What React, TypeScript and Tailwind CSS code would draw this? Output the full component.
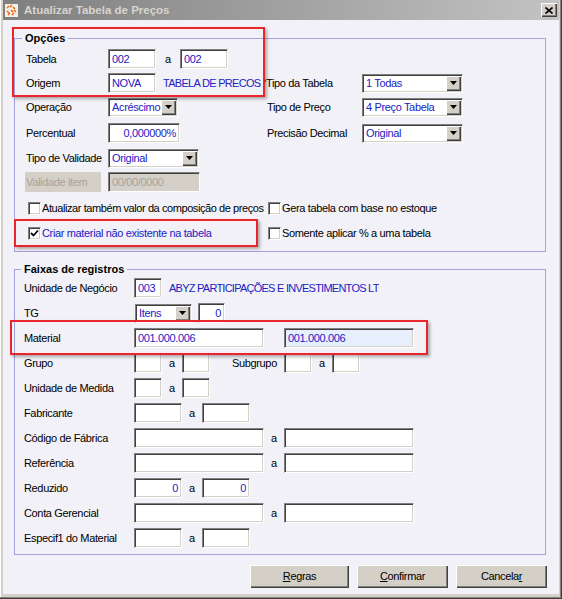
import React from "react";

const sunken =
  "border border-t-[#808080] border-l-[#808080] border-b-[#ffffff] border-r-[#ffffff] shadow-[inset_1px_1px_0_#404040,inset_-1px_-1px_0_#d4d0c8]";
const raised =
  "bg-[#d4d0c8] shadow-[inset_1px_1px_0_#ffffff,inset_-1px_-1px_0_#404040,inset_-2px_-2px_0_#808080]";

const Label = ({ w, children }: { w: string; children: React.ReactNode }) => (
  <span className={`${w} shrink-0 whitespace-nowrap text-black`}>{children}</span>
);

const Input = ({
  w,
  value = "",
  right = false,
  bg = "bg-white",
}: {
  w: string;
  value?: string;
  right?: boolean;
  bg?: string;
}) => (
  <div
    className={`${w} ${bg} ${sunken} h-[20px] shrink-0 flex items-center px-[3px] text-[#2121c4] whitespace-nowrap overflow-hidden ${
      right ? "justify-end" : ""
    }`}
  >
    {value}
  </div>
);

const Select = ({ w, value }: { w: string; value: string }) => (
  <div className={`${w} ${sunken} h-[19px] shrink-0 bg-white flex items-stretch p-[1px]`}>
    <span className="flex-1 pl-[2px] flex items-center text-[#2121c4] whitespace-nowrap overflow-hidden">
      {value}
    </span>
    <span className={`${raised} w-[15px] shrink-0 flex items-center justify-center`}>
      <svg width="7" height="4" viewBox="0 0 7 4">
        <path d="M0 0h7L3.5 4z" fill="#000" />
      </svg>
    </span>
  </div>
);

const Check = ({
  checked = false,
  label,
  blue = false,
  tight = false,
}: {
  checked?: boolean;
  label: string;
  blue?: boolean;
  tight?: boolean;
}) => (
  <div className="flex items-center">
    <span className={`${sunken} w-[13px] h-[13px] bg-white flex items-center justify-center shrink-0`}>
      {checked && (
        <svg width="9" height="9" viewBox="0 0 9 9">
          <path d="M1 4l2.5 2.5L8 1.5" stroke="#000" strokeWidth="1.8" fill="none" />
        </svg>
      )}
    </span>
    <span
      className={`ml-[1px] whitespace-nowrap ${blue ? "text-[#2121c4]" : "text-black"} ${
        tight ? "tracking-[-0.42px]" : ""
      }`}
    >
      {label}
    </span>
  </div>
);

const A = ({ w = "w-[20px]" }: { w?: string }) => <span className={`${w} shrink-0 text-center`}>a</span>;

const Row = ({ children, cls = "" }: { children: React.ReactNode; cls?: string }) => (
  <div className={`h-[20px] flex items-center ${cls}`}>{children}</div>
);

const Button = ({ w, children }: { w: string; children: React.ReactNode }) => (
  <div className={`${w} ${raised} h-[23px] flex items-center justify-center text-black`}>{children}</div>
);

export default function App() {
  return (
    <div className="relative w-[562px] h-[599px] bg-[#d4d0c8] px-[3px] pb-[5px] flex flex-col font-['Liberation_Sans',Arial,sans-serif] text-[11px] leading-[13px] tracking-[-0.35px] shadow-[inset_-1px_-1px_0_#404040,inset_-2px_-2px_0_#808080,inset_1px_0_0_#ffffff]">
      {/* barra de titulo */}
      <div className="h-[20px] shrink-0 flex items-center bg-linear-to-r from-[#7f7f7f] to-[#c3c3c3] pl-[2px] pr-[2px]">
        <svg width="13" height="13" viewBox="0 0 13 13" className="shrink-0">
          <rect width="13" height="13" fill="#f4efe8" />
          <path d="M2 4l2-2M5 3l2-2M8 3l2 2M9 6l2 2M2 7l2 2M3 11l2-2M6 6l2 2M7 11l2-2" stroke="#f06a20" strokeWidth="1.6" />
        </svg>
        <span className="ml-[6px] font-bold text-[11.5px] tracking-normal text-[#d8d4ce]">Atualizar Tabela de Preços</span>
        <div className={`${raised} ml-auto w-[16px] h-[14px] flex items-center justify-center`}>
          <svg width="8" height="7" viewBox="0 0 8 7">
            <path d="M0.5 0.5l7 6M7.5 0.5l-7 6" stroke="#000" strokeWidth="1.6" />
          </svg>
        </div>
      </div>

      {/* corpo */}
      <div className="flex-1 bg-[#f1f1f7] flex flex-col">
        <fieldset className="ml-[11px] mt-[12px] w-[532px] border border-[#a3a3de] p-0 m-0">
          <legend className="ml-[7px] px-[3px] font-bold leading-[13px] tracking-normal">Opções</legend>
          <div className="pl-[11px] pt-[4px] pb-[8px] flex flex-col">
            <Row>
              <Label w="w-[82px]">Tabela</Label>
              <Input w="w-[48px]" value="002" />
              <A w="w-[24px]" />
              <Input w="w-[48px]" value="002" />
            </Row>
            <Row cls="mt-[4px]">
              <Label w="w-[82px]">Origem</Label>
              <Input w="w-[48px]" value="NOVA" />
              <span className="ml-[7px] w-[103px] shrink-0 overflow-hidden whitespace-nowrap text-[#2121c4] tracking-[-0.7px]">
                TABELA DE PRECOS NOVA
              </span>
              <Label w="w-[96px]">Tipo da Tabela</Label>
              <Select w="w-[101px]" value="1 Todas" />
            </Row>
            <Row cls="mt-[4px]">
              <Label w="w-[82px]">Operação</Label>
              <div className="w-[159px] shrink-0">
                <Select w="w-[70px]" value="Acréscimo" />
              </div>
              <Label w="w-[95px]">Tipo de Preço</Label>
              <Select w="w-[101px]" value="4 Preço Tabela" />
            </Row>
            <Row cls="mt-[6px]">
              <Label w="w-[82px]">Percentual</Label>
              <div className="w-[159px] shrink-0">
                <Input w="w-[72px]" value="0,000000%" right />
              </div>
              <Label w="w-[95px]">Precisão Decimal</Label>
              <Select w="w-[101px]" value="Original" />
            </Row>
            <Row cls="mt-[5px]">
              <Label w="w-[82px]">Tipo de Validade</Label>
              <Select w="w-[91px]" value="Original" />
            </Row>
            <Row cls="mt-[4px]">
              <span className="-ml-[1px] w-[76px] h-[20px] shrink-0 bg-[#d4d0c8] pl-[1px] flex items-center text-[#a6a29c] whitespace-nowrap">
                Validade item
              </span>
              <div className="w-[7px] shrink-0" />
              <div className={`${sunken} w-[92px] h-[20px] bg-[#d4d0c8] flex items-center px-[3px] text-[#a6a29c]`}>
                00/00/0000
              </div>
            </Row>
            <Row cls="mt-[6px] pl-[2px]">
              <div className="w-[240px] shrink-0">
                <Check tight label="Atualizar também valor da composição de preços" />
              </div>
              <Check label="Gera tabela com base no estoque" />
            </Row>
            <Row cls="mt-[5px] pl-[2px]">
              <div className="w-[240px] shrink-0">
                <Check checked blue label="Criar material não existente na tabela" />
              </div>
              <Check label="Somente aplicar % a uma tabela" />
            </Row>
          </div>
        </fieldset>

        <fieldset className="ml-[11px] mt-[11px] w-[532px] border border-[#a3a3de] p-0 m-0">
          <legend className="ml-[6px] px-[3px] font-bold leading-[13px] tracking-normal">Faixas de registros</legend>
          <div className="pl-[9px] pt-[2px] pb-[6px] flex flex-col gap-[5px]">
            <Row>
              <Label w="w-[110px]">Unidade de Negócio</Label>
              <Input w="w-[28px]" value="003" />
              <span className="ml-[7px] w-[210px] shrink-0 overflow-hidden whitespace-nowrap text-[#2121c4] tracking-[-0.75px]">
                ABYZ PARTICIPAÇÕES E INVESTIMENTOS LTDA
              </span>
            </Row>
            <Row>
              <Label w="w-[111px]">TG</Label>
              <Select w="w-[57px]" value="Itens" />
              <div className="w-[6px] shrink-0" />
              <Input w="w-[27px]" value="0" right />
            </Row>
            <Row>
              <Label w="w-[110px]">Material</Label>
              <Input w="w-[130px]" value="001.000.006" />
              <div className="w-[20px] shrink-0" />
              <Input w="w-[130px]" value="001.000.006" bg="bg-[#e6effb]" />
            </Row>
            <Row>
              <Label w="w-[110px]">Grupo</Label>
              <Input w="w-[28px]" />
              <A />
              <Input w="w-[28px]" />
              <div className="w-[22px] shrink-0" />
              <Label w="w-[52px]">Subgrupo</Label>
              <Input w="w-[28px]" />
              <A />
              <Input w="w-[28px]" />
            </Row>
            <Row>
              <Label w="w-[110px]">Unidade de Medida</Label>
              <Input w="w-[28px]" />
              <A />
              <Input w="w-[28px]" />
            </Row>
            <Row>
              <Label w="w-[110px]">Fabricante</Label>
              <Input w="w-[48px]" />
              <A />
              <Input w="w-[48px]" />
            </Row>
            <Row>
              <Label w="w-[110px]">Código de Fábrica</Label>
              <Input w="w-[130px]" />
              <A />
              <Input w="w-[130px]" />
            </Row>
            <Row>
              <Label w="w-[110px]">Referência</Label>
              <Input w="w-[130px]" />
              <A />
              <Input w="w-[130px]" />
            </Row>
            <Row>
              <Label w="w-[110px]">Reduzido</Label>
              <Input w="w-[48px]" value="0" right />
              <A />
              <Input w="w-[48px]" value="0" right />
            </Row>
            <Row>
              <Label w="w-[110px]">Conta Gerencial</Label>
              <Input w="w-[130px]" />
              <A />
              <Input w="w-[130px]" />
            </Row>
            <Row>
              <Label w="w-[110px]">Especif1 do Material</Label>
              <Input w="w-[48px]" />
              <A />
              <Input w="w-[48px]" />
            </Row>
          </div>
        </fieldset>

        <div className="mt-[10px] pr-[12px] flex justify-end gap-[8px]">
          <Button w="w-[99px]">
            <span>
              <span className="underline">R</span>egras
            </span>
          </Button>
          <Button w="w-[91px]">
            <span>
              <span className="underline">C</span>onfirmar
            </span>
          </Button>
          <Button w="w-[91px]">
            <span>
              Cancela<span className="underline">r</span>
            </span>
          </Button>
        </div>
      </div>

      {/* destaques vermelhos */}
      <div className="absolute left-[12px] top-[27px] w-[253px] h-[70px] border-2 border-[#e8262b] shadow-[2px_2px_3px_rgba(0,0,0,0.3)] pointer-events-none" />
      <div className="absolute left-[14px] top-[219px] w-[244px] h-[28px] border-2 border-[#e8262b] shadow-[2px_2px_3px_rgba(0,0,0,0.3)] pointer-events-none" />
      <div className="absolute left-[10px] top-[320px] w-[418px] h-[35px] border-2 border-[#e8262b] shadow-[2px_2px_3px_rgba(0,0,0,0.3)] pointer-events-none" />
    </div>
  );
}
